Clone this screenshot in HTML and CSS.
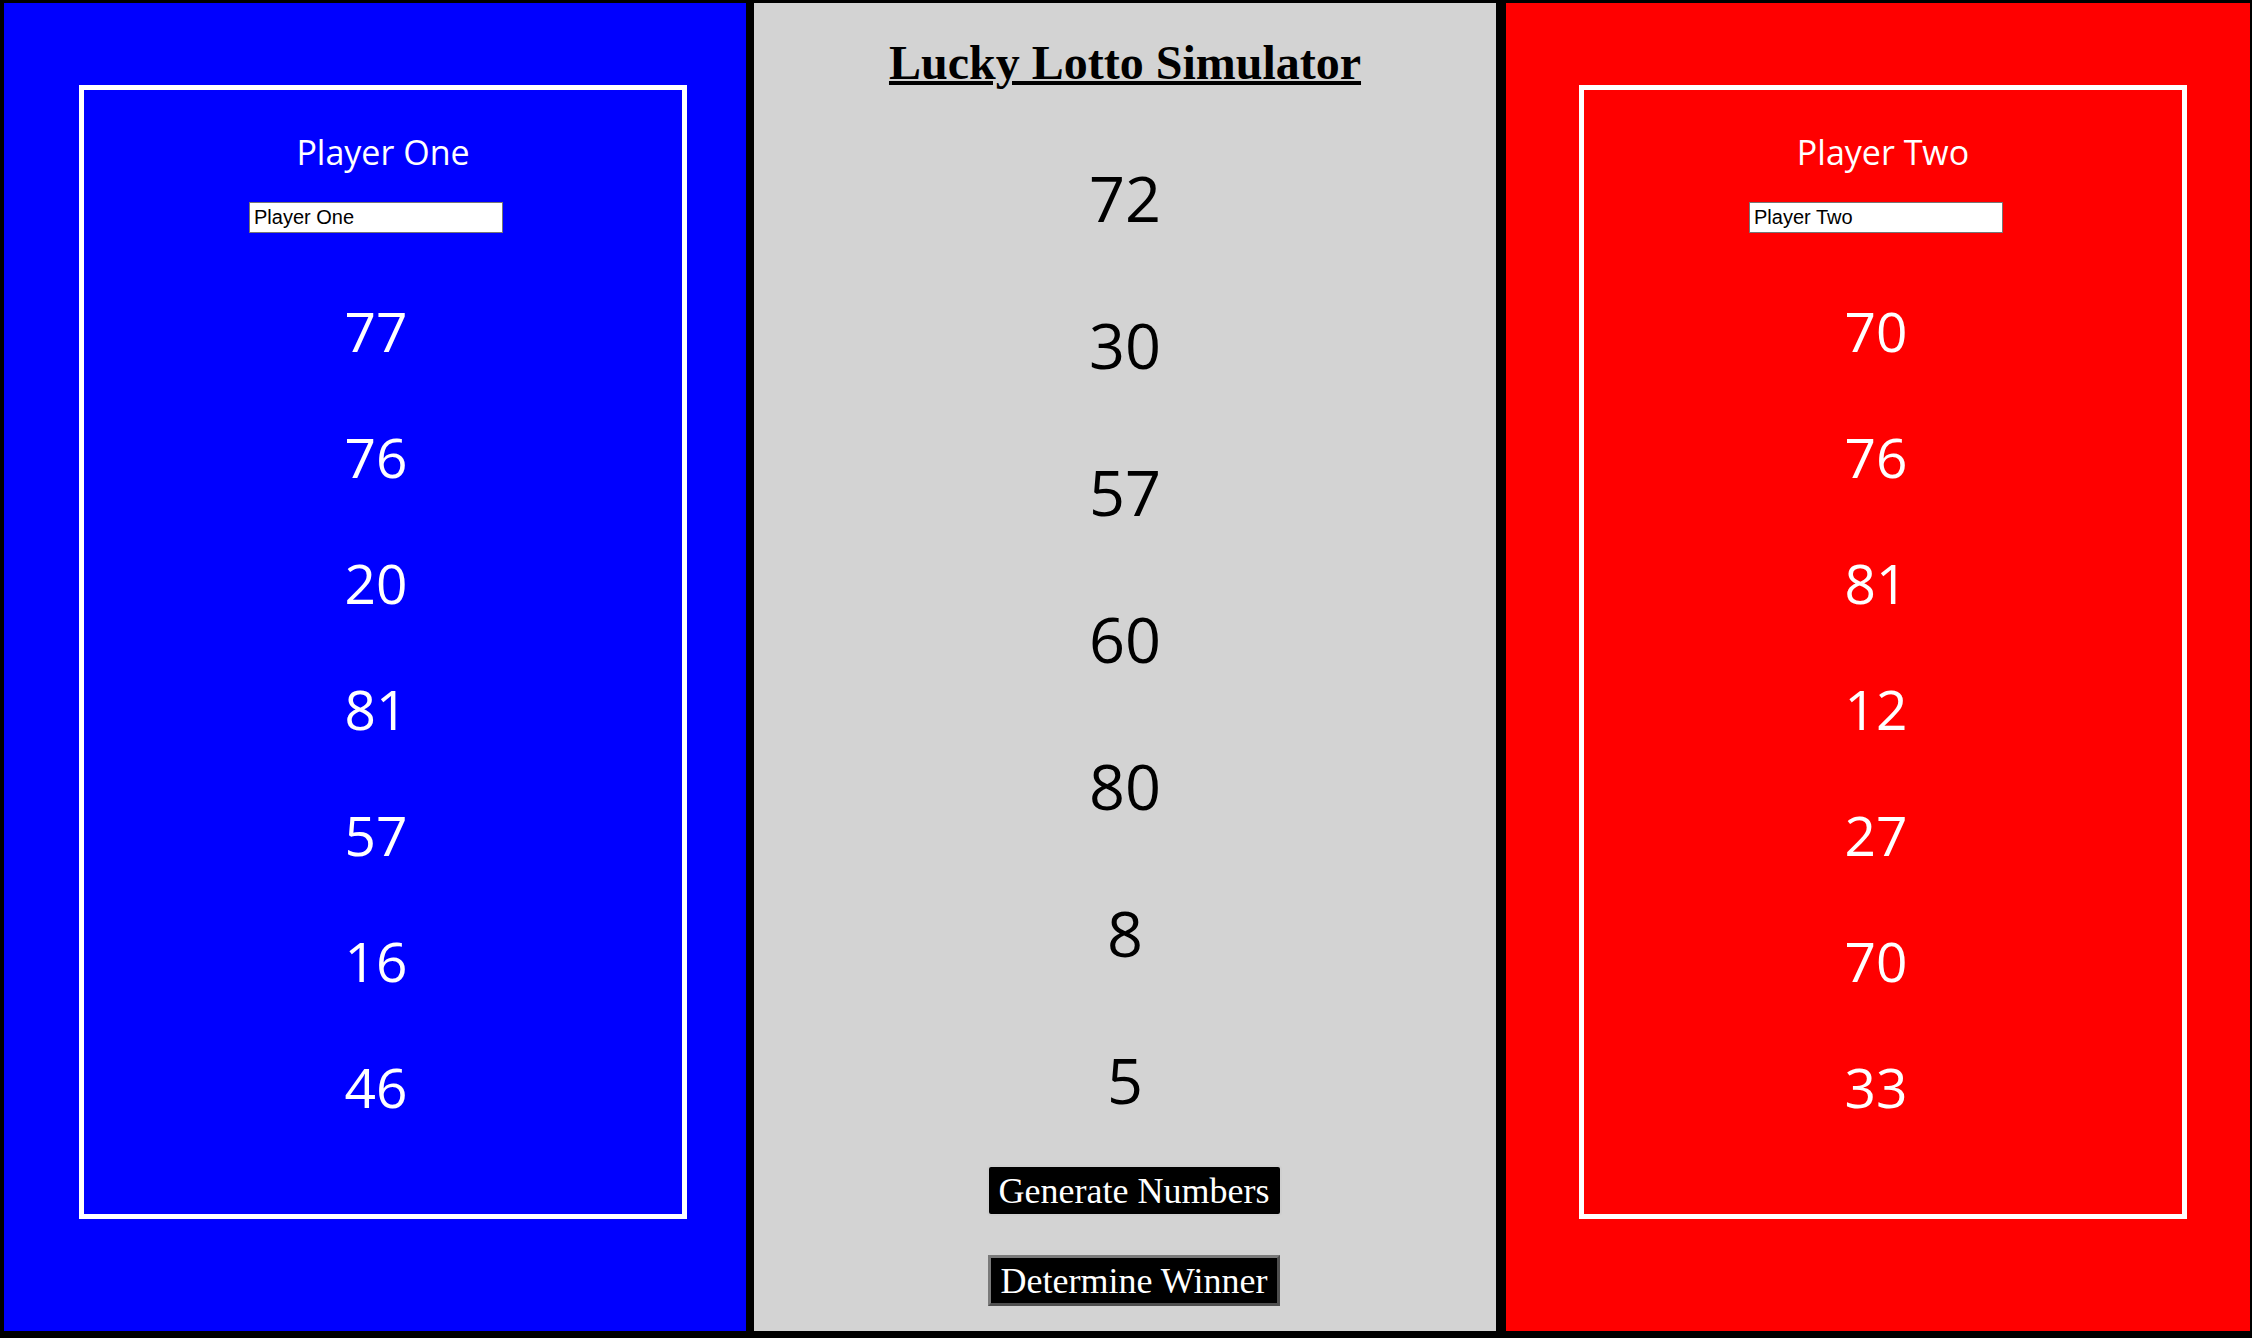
FILE: index.html
```html
<!DOCTYPE html>
<html lang="en">
<head>
<meta charset="utf-8">
<title>Lucky Lotto Simulator</title>
<link rel="stylesheet" href="styles.css">
</head>
<body>
<main class="board">
  <section class="panel panel-blue">
    <div class="card">
      <h2 class="player-title">Player One</h2>
      <div class="card-body">
        <input class="name-input" type="text" value="Player One">
        <ul class="numbers">
          <li>77</li>
          <li>76</li>
          <li>20</li>
          <li>81</li>
          <li>57</li>
          <li>16</li>
          <li>46</li>
        </ul>
      </div>
    </div>
  </section>

  <section class="panel panel-center">
    <h1 class="title">Lucky Lotto Simulator</h1>
    <ul class="draw">
      <li>72</li>
      <li>30</li>
      <li>57</li>
      <li>60</li>
      <li>80</li>
      <li>8</li>
      <li>5</li>
    </ul>
    <div class="actions">
      <button class="btn btn-generate" type="button">Generate Numbers</button>
      <button class="btn btn-winner" type="button">Determine Winner</button>
    </div>
  </section>

  <section class="panel panel-red">
    <div class="card">
      <h2 class="player-title">Player Two</h2>
      <div class="card-body">
        <input class="name-input" type="text" value="Player Two">
        <ul class="numbers">
          <li>70</li>
          <li>76</li>
          <li>81</li>
          <li>12</li>
          <li>27</li>
          <li>70</li>
          <li>33</li>
        </ul>
      </div>
    </div>
  </section>
</main>
</body>
</html>
```

FILE: styles.css
```css
html, body {
  margin: 0;
  padding: 0;
  background: #000;
}

body {
  height: 1338px;
  overflow: hidden;
}

.board {
  display: flex;
  align-items: stretch;
  padding: 3px 2px 0 4px;
  height: 1328px;
}

.panel {
  flex: none;
  width: 742px;
  box-sizing: border-box;
}

.panel-blue {
  background: #0000ff;
  padding: 82px 0 0 75px;
}

.panel-red {
  width: 744px;
  background: #ff0000;
  padding: 82px 0 0 73px;
}

.panel-center {
  background: #d3d3d3;
  margin: 0 10px 0 8px;
  padding-top: 32px;
  display: flex;
  flex-direction: column;
  align-items: stretch;
}

.card {
  width: 608px;
  height: 1134px;
  box-sizing: border-box;
  border: 5px solid #ffffff;
  padding-top: 39px;
  color: #ffffff;
  font-family: "Open Sans", "Noto Sans", sans-serif;
}

.player-title {
  margin: 0;
  font-size: 34px;
  font-weight: 400;
  line-height: 46px;
  text-align: center;
}

.card-body {
  display: flex;
  flex-direction: column;
  align-items: center;
  padding-right: 14px;
  margin-top: 27px;
}

.name-input {
  display: block;
  width: 254px;
  height: 31px;
  box-sizing: border-box;
  margin: 0;
  padding: 0 0 0 4px;
  border: 1px solid #767676;
  background: #ffffff;
  color: #000000;
  font-family: "Liberation Sans", Arial, sans-serif;
  font-size: 20px;
  outline: none;
}

.numbers {
  align-self: stretch;
  list-style: none;
  margin: 35px 0 0;
  padding: 0;
  text-align: center;
  font-size: 55px;
  line-height: 126px;
}

.title {
  margin: 0;
  font-family: "Liberation Serif", "Times New Roman", serif;
  font-size: 48px;
  font-weight: 700;
  line-height: 55px;
  text-align: center;
  color: #000;
  text-decoration: underline;
  text-decoration-thickness: 4px;
  text-underline-offset: 2px;
}

.draw {
  list-style: none;
  margin: 34px 0 0;
  padding: 0;
  text-align: center;
  font-family: "Open Sans", "Noto Sans", sans-serif;
  font-size: 63px;
  line-height: 147px;
  color: #000;
}

.actions {
  display: flex;
  flex-direction: column;
  align-items: center;
  gap: 39px;
  margin-top: 12px;
  padding-left: 18px;
}

.btn {
  display: flex;
  align-items: center;
  justify-content: center;
  height: 51px;
  box-sizing: border-box;
  margin: 0;
  padding: 0;
  background: #000;
  color: #fff;
  font-family: "Liberation Serif", "Times New Roman", serif;
  font-size: 36px;
  line-height: normal;
  cursor: pointer;
}

.btn-generate {
  width: 295px;
  border: 2px solid #cfcfcf;
  border-radius: 4px;
}

.btn-winner {
  width: 292px;
  border-style: solid;
  border-width: 3px;
  border-color: #7a7a7a #4f4f4f #4f4f4f #7a7a7a;
  border-radius: 0;
}
```
